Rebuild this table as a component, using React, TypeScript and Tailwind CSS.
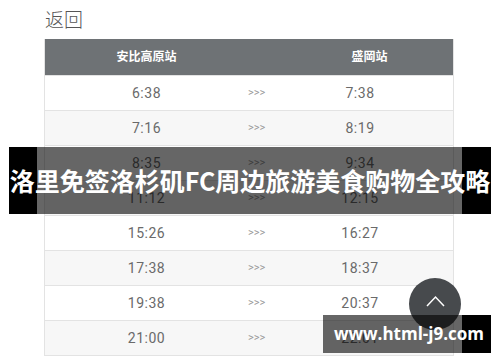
import React from "react";

const rows: [string, string][] = [
  ["6:38", "7:38"],
  ["7:16", "8:19"],
  ["8:35", "9:34"],
  ["11:12", "12:15"],
  ["15:26", "16:27"],
  ["17:38", "18:37"],
  ["19:38", "20:37"],
  ["21:00", "22:01"],
];

function Timetable() {
  return (
    <div className="w-[410px] border-x border-b border-[#e3e3e3]">
      {/* header */}
      <div className="flex h-[36px] items-center bg-[#6e7275] text-[12px] font-bold text-white">
        <div className="w-[203px] text-center">安比高原站</div>
        <div className="flex-1 pl-[38px] text-center">盛岡站</div>
      </div>
      {rows.map(([from, to], i) => (
        <div
          key={i}
          className={`flex h-[35px] items-center border-t border-[#e3e3e3] text-[14px] text-[#6a6a6a] ${
            i % 2 === 1 ? "bg-[#f7f7f7]" : "bg-white"
          }`}
        >
          <div className="w-[203px] text-center tracking-[0.5px]">{from}</div>
          <div className="w-[19px] text-[11px] text-[#999]">&gt;&gt;&gt;</div>
          <div className="flex-1 text-center tracking-[0.5px]">{to}</div>
        </div>
      ))}
    </div>
  );
}

export default function App() {
  return (
    <div
      className="relative h-[362px] w-[500px] overflow-hidden bg-white"
      style={{ fontFamily: 'Roboto, "Noto Sans CJK SC", sans-serif' }}
    >
      <div className="pl-[44px] pt-[6px]">
        <h1
          className="h-[33px] pl-[1px] text-[19px] font-light leading-[26px] text-[#555]"
          style={{ fontFamily: '"Noto Sans CJK SC", sans-serif' }}
        >
          返回
        </h1>
        <Timetable />
      </div>

      {/* title banner over the page */}
      <div className="absolute left-[9px] top-[147px] flex h-[67px] w-[482px]">
        <div className="w-[28px] bg-black" />
        <div className="flex-1 bg-black/60" />
        <div className="w-[29px] bg-black" />
        <div
          className="absolute inset-0 flex items-center justify-center whitespace-nowrap text-[25px] font-bold text-white"
          style={{ fontFamily: '"Noto Sans CJK SC", sans-serif' }}
        >
          洛里免签洛杉矶FC周边旅游美食购物全攻略
        </div>
      </div>

      {/* back to top */}
      <button className="absolute left-[409px] top-[278px] flex h-[52px] w-[52px] items-center justify-center rounded-full bg-[#474a4d]">
        <svg width="19" height="12" viewBox="0 0 19 12" className="-mt-[6px]">
          <path d="M1 11 L9.5 2 L18 11" fill="none" stroke="#fff" strokeWidth="1.5" />
        </svg>
      </button>

      {/* watermark */}
      <div className="absolute left-[323px] top-[315px] flex h-[38px] w-[168px]">
        <div className="flex-1 bg-black/60" />
        <div className="w-[29px] bg-black" />
        <div
          className="absolute inset-0 flex items-center justify-center pl-[4px] text-[17px] font-bold text-white"
          style={{ fontFamily: '"Open Sans", sans-serif' }}
        >
          www.html-j9.com
        </div>
      </div>
    </div>
  );
}
